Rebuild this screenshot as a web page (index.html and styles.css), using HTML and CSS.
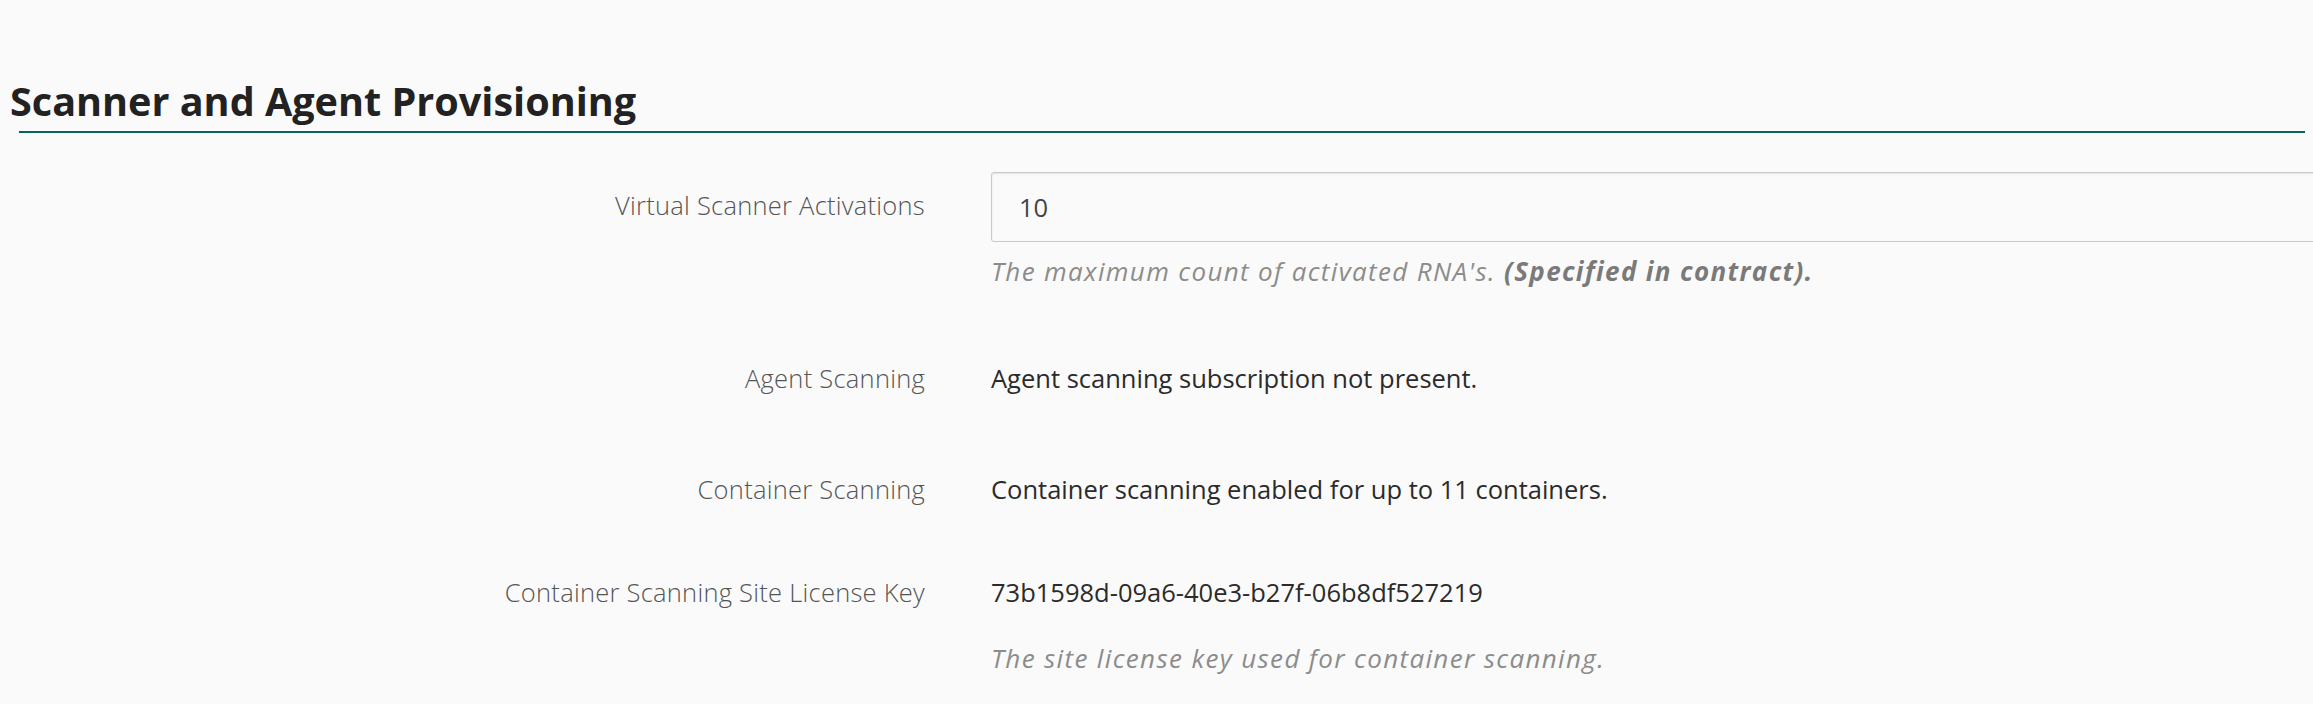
FILE: index.html
```html
<!DOCTYPE html>
<html lang="en">
<head>
<meta charset="utf-8">
<title>Scanner and Agent Provisioning</title>
<link rel="stylesheet" href="styles.css">
</head>
<body>
<div class="page">
  <section class="section">
    <h2 class="section-title">Scanner and Agent Provisioning</h2>
    <div class="section-rule"></div>

    <form class="form">
      <div class="form-group group-input">
        <label class="form-label" for="vsa">Virtual Scanner Activations</label>
        <div class="form-control-wrap">
          <input class="form-input" id="vsa" type="text" value="10">
          <p class="help help-input">The maximum count of activated RNA's. <strong>(Specified in contract).</strong></p>
        </div>
      </div>

      <div class="form-group group-agent">
        <span class="form-label">Agent Scanning</span>
        <div class="form-control-wrap">
          <p class="form-static">Agent scanning subscription not present.</p>
        </div>
      </div>

      <div class="form-group group-container">
        <span class="form-label">Container Scanning</span>
        <div class="form-control-wrap">
          <p class="form-static">Container scanning enabled for up to 11 containers.</p>
        </div>
      </div>

      <div class="form-group group-key">
        <span class="form-label">Container Scanning Site License Key</span>
        <div class="form-control-wrap">
          <p class="form-static">73b1598d-09a6-40e3-b27f-06b8df527219</p>
          <p class="help help-static">The site license key used for container scanning.</p>
        </div>
      </div>
    </form>
  </section>
</div>
</body>
</html>
```
FILE: styles.css
```css
html, body {
  margin: 0;
  padding: 0;
  background: #fafafa;
}

body {
  font-family: "Open Sans", "Noto Sans", sans-serif;
  color: #333;
  overflow: hidden;
}

.page {
  width: 100%;
  overflow: hidden;
}

.section {
  padding-top: 77px;
}

.section-title {
  margin: 0;
  padding-left: 10px;
  font-size: 39.6px;
  line-height: 48px;
  font-weight: 700;
  color: #222;
}

.section-rule {
  height: 2px;
  margin: 6px 8px 0 19px;
  background: #00695a;
}

.form {
  margin-top: 39px;
}

.form-group {
  display: grid;
  grid-template-columns: 925px 1fr;
  column-gap: 66px;
  align-items: start;
}

.group-input { margin-bottom: 71px; }
.group-agent { margin-bottom: 75px; }
.group-container { margin-bottom: 67px; }

.form-label {
  display: block;
  text-align: right;
  font-size: 25.5px;
  line-height: 36px;
  font-weight: 300;
  letter-spacing: 0.25px;
  color: #555;
}

.group-input .form-label {
  padding-top: 15px;
}

.form-control-wrap {
  min-width: 0;
}

.form-input {
  display: block;
  box-sizing: border-box;
  width: calc(100% + 40px);
  height: 70px;
  margin: 0;
  padding: 0 27px;
  border: 1px solid #c9c9c9;
  border-radius: 3px;
  background: #fafafa;
  box-shadow: inset 0 1px 2px rgba(0, 0, 0, 0.1);
  font-family: "Open Sans", "Noto Sans", sans-serif;
  font-size: 25.5px;
  color: #444;
  outline: none;
}

.form-static {
  margin: 0;
  font-size: 25.5px;
  line-height: 36px;
  color: #2b2b2b;
}

.help {
  margin: 0;
  font-size: 26px;
  line-height: 36px;
  font-style: italic;
  letter-spacing: 1.35px;
  color: #8c8c8c;
}

.help strong {
  font-weight: 700;
  color: #7a7a7a;
}

.help-input { margin-top: 11px; }
.help-static { margin-top: 30px; }
```
